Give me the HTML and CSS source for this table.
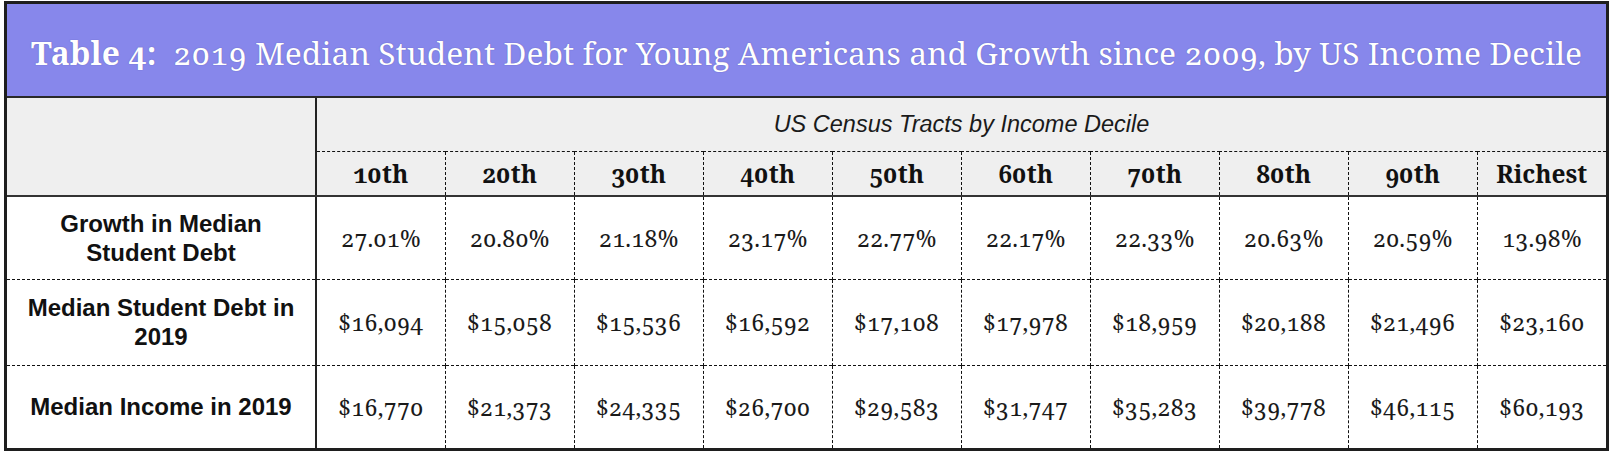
FILE: index.html
```html
<!DOCTYPE html>
<html>
<head>
<meta charset="utf-8">
<link rel="stylesheet" href="styles.css">
</head>
<body>
<div class="frame">
  <div class="title"><b>Table 4:</b>&nbsp; 2019 Median Student Debt for Young Americans and Growth since 2009, by US Income Decile</div>
  <table class="grid">
    <colgroup>
      <col class="c-label">
      <col><col><col><col><col><col><col><col><col><col>
    </colgroup>
    <thead>
      <tr class="r-sub">
        <th class="corner" rowspan="2"></th>
        <th class="sub" colspan="10">US Census Tracts by Income Decile</th>
      </tr>
      <tr class="r-dec">
        <th>10th</th><th>20th</th><th>30th</th><th>40th</th><th>50th</th><th>60th</th><th>70th</th><th>80th</th><th>90th</th><th>Richest</th>
      </tr>
    </thead>
    <tbody>
      <tr class="r1">
        <th class="label">Growth in Median<br>Student Debt</th>
        <td>27.01%</td><td>20.80%</td><td>21.18%</td><td>23.17%</td><td>22.77%</td><td>22.17%</td><td>22.33%</td><td>20.63%</td><td>20.59%</td><td>13.98%</td>
      </tr>
      <tr class="r2">
        <th class="label">Median Student Debt in<br>2019</th>
        <td>$16,094</td><td>$15,058</td><td>$15,536</td><td>$16,592</td><td>$17,108</td><td>$17,978</td><td>$18,959</td><td>$20,188</td><td>$21,496</td><td>$23,160</td>
      </tr>
      <tr class="r3">
        <th class="label">Median Income in 2019</th>
        <td>$16,770</td><td>$21,373</td><td>$24,335</td><td>$26,700</td><td>$29,583</td><td>$31,747</td><td>$35,283</td><td>$39,778</td><td>$46,115</td><td>$60,193</td>
      </tr>
    </tbody>
  </table>
</div>
</body>
</html>
```
FILE: styles.css
```css
html, body {
  margin: 0;
  padding: 0;
  background: #ffffff;
}

body {
  padding: 1px 0 0 4px;
}

.frame {
  width: 1605px;
  height: 450px;
  box-sizing: border-box;
  border: 3px solid #1e1e1e;
  background: #ffffff;
  display: flex;
  flex-direction: column;
}

.title {
  height: 94px;
  flex: none;
  box-sizing: border-box;
  padding-top: 4px;
  background: #8787eb;
  border-bottom: 2px solid #2a2a2a;
  display: flex;
  align-items: center;
  justify-content: center;
  font-family: "Noto Serif", "DejaVu Serif", serif;
  font-variant-numeric: oldstyle-nums;
  font-size: 31.8px;
  color: #ffffff;
  white-space: nowrap;
  text-shadow: 0 0 1px rgba(40, 40, 110, 0.55);
}

.title b {
  font-weight: 700;
}

.grid {
  width: 100%;
  flex: 1;
  border-collapse: collapse;
  table-layout: fixed;
}

.c-label {
  width: 309px;
}

.grid th,
.grid td {
  padding: 0;
  text-align: center;
  vertical-align: middle;
}

thead th {
  background: #efefef;
}

.corner {
  border-right: 2px solid #222;
  border-bottom: 2px solid #333;
}

.r-sub {
  height: 53px;
}

.sub {
  font-family: "Liberation Sans", Arial, sans-serif;
  font-style: italic;
  font-weight: normal;
  font-size: 23.5px;
  color: #1a1a1a;
  border-bottom: 1px dashed #111;
  padding-top: 2px;
}

.r-dec {
  height: 45px;
}

.r-dec th {
  font-family: "Noto Serif", "DejaVu Serif", serif;
  font-variant-numeric: oldstyle-nums;
  font-weight: 700;
  font-size: 24.5px;
  color: #111;
  border-bottom: 2px solid #333;
  border-left: 1px dashed #111;
}

.r-dec th:first-child {
  border-left: none;
}

.label {
  font-family: "Liberation Sans", Arial, sans-serif;
  font-weight: 700;
  font-size: 24px;
  line-height: 29px;
  color: #111;
  border-right: 2px solid #222;
}

tbody td {
  font-family: "Noto Serif", "DejaVu Serif", serif;
  font-variant-numeric: oldstyle-nums;
  font-size: 23px;
  color: #1a1a1a;
  border-left: 1px dashed #111;
}

tbody tr + tr th,
tbody tr + tr td {
  border-top: 1px dashed #111;
}

.r1 { height: 83px; }
.r2 { height: 86px; }
.r3 { height: 83px; }
```
